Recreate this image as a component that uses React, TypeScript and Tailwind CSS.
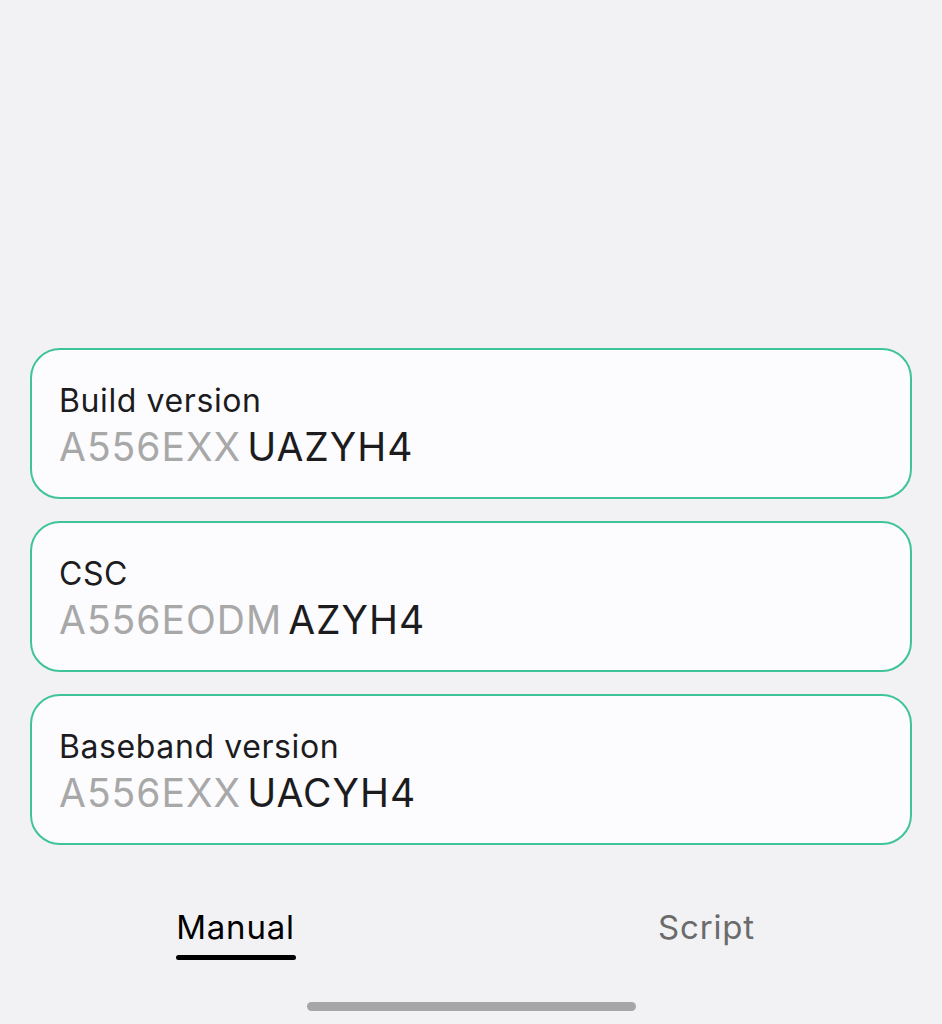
import React from "react";

type Item = { label: string; prefix: string; suffix: string };

const items: Item[] = [
  { label: "Build version", prefix: "A556EXX", suffix: "UAZYH4" },
  { label: "CSC", prefix: "A556EODM", suffix: "AZYH4" },
  { label: "Baseband version", prefix: "A556EXX", suffix: "UACYH4" },
];

const VersionCard = ({ item }: { item: Item }) => (
  <div className="h-[151px] rounded-[30px] border-2 border-[#3fc497] bg-[#fcfcfe] pl-[27px] pt-[30px]">
    <p className="text-[32px] leading-[42px] tracking-[0.6px] text-[#1c1c1e]">{item.label}</p>
    <p className="mt-[1px] text-[39px] leading-[48px] tracking-[1px]">
      <span className="text-[#a8a8a8]">{item.prefix}</span>
      <span className="ml-[6px] text-[#1c1c1e]">{item.suffix}</span>
    </p>
  </div>
);

export default function App() {
  return (
    <div
      className="flex h-[1024px] w-full flex-col bg-[#f2f2f4]"
      style={{ fontFamily: "Inter, 'Noto Sans', sans-serif" }}
    >
      <div className="flex flex-col gap-[22px] px-[30px] pt-[348px]">
        {items.map((item) => (
          <VersionCard key={item.label} item={item} />
        ))}
      </div>
      <div className="mt-[62px] grid grid-cols-2">
        <div className="flex justify-center">
          <div className="flex flex-col items-center">
            <span className="text-[33px] leading-[40px] tracking-[0.8px] text-black">Manual</span>
            <div className="mt-[8px] h-[5px] w-[120px] rounded-full bg-black" />
          </div>
        </div>
        <div className="flex justify-center">
          <span className="text-[33px] leading-[40px] tracking-[0.8px] text-[#6b6b6b]">Script</span>
        </div>
      </div>
      <div className="mt-[42px] flex justify-center">
        <div className="h-[9px] w-[329px] rounded-full bg-[#a6a6a8]" />
      </div>
    </div>
  );
}
